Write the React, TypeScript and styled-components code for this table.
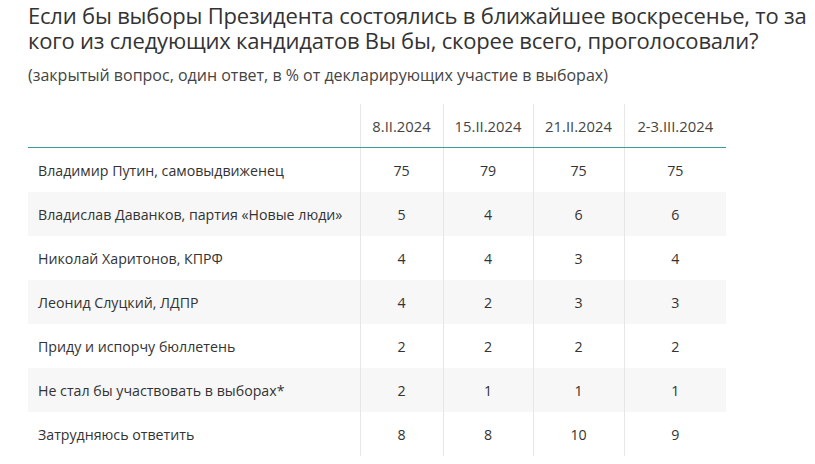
import React from "react";
import styled, { createGlobalStyle } from "styled-components";

const GlobalStyle = createGlobalStyle`
  body {
    margin: 0;
    background: #ffffff;
    font-family: "Open Sans", "Noto Sans", sans-serif;
    color: #333333;
  }
`;

const dates = ["8.II.2024", "15.II.2024", "21.II.2024", "2-3.III.2024"];
const colWidths = [332, 83, 90, 91, 102];

const rows: { label: string; values: string[] }[] = [
  { label: "Владимир Путин, самовыдвиженец", values: ["75", "79", "75", "75"] },
  { label: "Владислав Даванков, партия «Новые люди»", values: ["5", "4", "6", "6"] },
  { label: "Николай Харитонов, КПРФ", values: ["4", "4", "3", "4"] },
  { label: "Леонид Слуцкий, ЛДПР", values: ["4", "2", "3", "3"] },
  { label: "Приду и испорчу бюллетень", values: ["2", "2", "2", "2"] },
  { label: "Не стал бы участвовать в выборах*", values: ["2", "1", "1", "1"] },
  { label: "Затрудняюсь ответить", values: ["8", "8", "10", "9"] },
];

function App() {
  return (
    <Page>
      <GlobalStyle />
      <Title>
        Если бы выборы Президента состоялись в ближайшее воскресенье, то за
        кого из следующих кандидатов Вы бы, скорее всего, проголосовали?
      </Title>
      <Note>(закрытый вопрос, один ответ, в % от декларирующих участие в выборах)</Note>
      <Table>
        <colgroup>
          {colWidths.map((w, i) => (
            <col key={i} style={{ width: w }} />
          ))}
        </colgroup>
        <thead>
          <tr>
            <HeadCell />
            {dates.map((d) => (
              <HeadCell key={d} $center>
                {d}
              </HeadCell>
            ))}
          </tr>
        </thead>
        <tbody>
          {rows.map((r, i) => (
            <Row key={r.label} $striped={i % 2 === 1}>
              <Cell>{r.label}</Cell>
              {r.values.map((v, j) => (
                <Cell key={j} $center>
                  {v}
                </Cell>
              ))}
            </Row>
          ))}
        </tbody>
      </Table>
    </Page>
  );
}

export default App;

const Page = styled.div`
  padding: 3px 0 0 28px;
  width: 790px;
`;

const Title = styled.h1`
  margin: 0;
  font-size: 22px;
  line-height: 25px;
  font-weight: 400;
  color: #333333;
  letter-spacing: -0.2px;
`;

const Note = styled.p`
  margin: 12px 0 0;
  font-size: 16px;
  line-height: 20px;
  color: #444444;
`;

const Table = styled.table`
  margin-top: 19px;
  border-collapse: collapse;
  table-layout: fixed;
  width: 698px;
  font-size: 14.2px;
`;

const HeadCell = styled.th<{ $center?: boolean }>`
  height: 43px;
  padding: 0 6px;
  font-size: 14.8px;
  font-weight: 400;
  color: #444444;
  text-align: ${(p) => (p.$center ? "center" : "left")};
  white-space: nowrap;
  border-bottom: 1.5px solid #3a9e96;
  & + & {
    border-left: 1px solid #e6e6e6;
  }
`;

const Row = styled.tr<{ $striped: boolean }>`
  background: ${(p) => (p.$striped ? "#f7f7f7" : "#ffffff")};
`;

const Cell = styled.td<{ $center?: boolean }>`
  height: 44px;
  padding: 0 10px;
  color: #333333;
  text-align: ${(p) => (p.$center ? "center" : "left")};
  white-space: nowrap;
  & + & {
    border-left: 1px solid #e6e6e6;
  }
`;
